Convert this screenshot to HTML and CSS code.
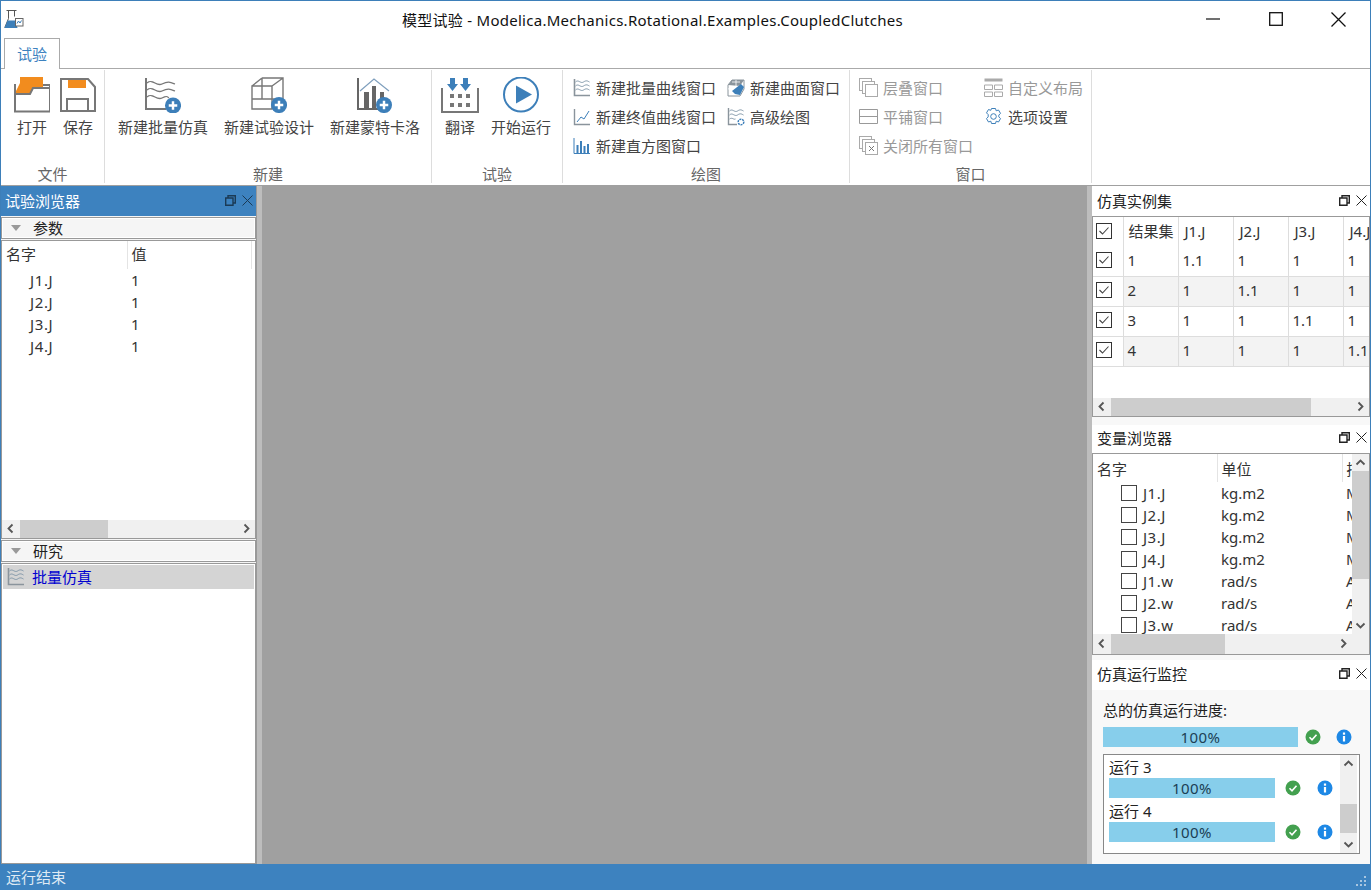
FILE: index.html
```html
<!DOCTYPE html>
<html lang="zh-CN">
<head>
<meta charset="UTF-8" />
<title>模型试验 - Modelica.Mechanics.Rotational.Examples.CoupledClutches</title>
<link rel="stylesheet" href="styles.css">
</head>
<body>
<svg class="defs" aria-hidden="true">
  <symbol id="plus" viewBox="0 0 18 18"><circle cx="9" cy="9" r="8.500" fill="#3d7fb9"/><path d="M9 4.500v9M4.500 9h9" stroke="#fff" stroke-width="2.600"/></symbol>
  <symbol id="waves" viewBox="0 0 18 18"><path d="M1.500 0v16.500H17" fill="none" stroke="#8a949c" stroke-width="1.600"/><g fill="none" stroke="#7f96a8" stroke-width="1"><path d="M2.500 3c3-3 5 2 8 0s4-1 6 0"/><path d="M2.500 7c3-3 5 2 8 0s4-1 6 0"/><path d="M2.500 11c3-3 5 2 8 0s4-1 6 0"/></g></symbol>
  <symbol id="restore" viewBox="0 0 11 11"><path d="M.7 3h7.300v7.300H.700zM3 3V.7h7.300V8H8" fill="none" stroke="currentColor" stroke-width="1.400"/></symbol>
  <symbol id="cross" viewBox="0 0 11 11"><path d="M.5.5l10 10M10.500.5l-10 10" fill="none" stroke="currentColor" stroke-width="1"/></symbol>
  <symbol id="ok" viewBox="0 0 16 16"><circle cx="8" cy="8" r="7.500" fill="#43a04f"/><path d="M4.500 8.300l2.500 2.500 4.500-5" fill="none" stroke="#fff" stroke-width="1.600"/></symbol>
  <symbol id="info" viewBox="0 0 16 16"><circle cx="8" cy="8" r="7.500" fill="#1e88e5"/><rect x="6.900" y="7" width="2.200" height="5.500" fill="#fff"/><rect x="6.900" y="3.500" width="2.200" height="2.200" fill="#fff"/></symbol>
  <symbol id="left" viewBox="0 0 17 17"><path d="M10.500 4.500l-4 4 4 4" fill="none" stroke="#555" stroke-width="1.800"/></symbol>
  <symbol id="right" viewBox="0 0 17 17"><path d="M6.500 4.500l4 4-4 4" fill="none" stroke="#555" stroke-width="1.800"/></symbol>
  <symbol id="up" viewBox="0 0 17 17"><path d="M4.500 10.500l4-4 4 4" fill="none" stroke="#555" stroke-width="1.800"/></symbol>
  <symbol id="down" viewBox="0 0 17 17"><path d="M4.500 6.500l4 4 4-4" fill="none" stroke="#555" stroke-width="1.800"/></symbol>
  <symbol id="tick" viewBox="0 0 16 16"><rect x=".5" y=".5" width="15" height="15" fill="#fff" stroke="#333"/><path d="M3.500 8l3 3 6-6.500" fill="none" stroke="#444" stroke-width="1.100"/></symbol>
</svg>

<div class="window">
  <div class="titlebar">
    <svg class="app-icon" viewBox="0 0 20 20">
      <path d="M2.500 1.500h10M4.500 1.500v8L.8 18.500h12M10.500 1.500v6" fill="none" stroke="#555" stroke-width="1"/>
      <path d="M3.500 11.500L.5 19h13l-2-7.500z" fill="#3d7fb9"/>
      <rect x="11.500" y="9.500" width="7.500" height="7.500" fill="#fff" stroke="#666"/>
      <path d="M13 14.500l1.500-2.500 1.500 2 1.500-2.500" fill="none" stroke="#3d7fb9"/>
    </svg>
    <div class="title">模型试验 - Modelica.Mechanics.Rotational.Examples.CoupledClutches</div>
    <div class="winbtn"><svg width="14" height="14" viewBox="0 0 14 14"><path d="M0 7h14" stroke="#111" stroke-width="1.200"/></svg></div>
    <div class="winbtn"><svg width="14" height="14" viewBox="0 0 14 14"><rect x=".7" y=".7" width="12.600" height="12.600" fill="none" stroke="#111" stroke-width="1.300"/></svg></div>
    <div class="winbtn"><svg width="15" height="15" viewBox="0 0 15 15"><path d="M.5.5l14 14M14.500.5l-14 14" stroke="#111" stroke-width="1.300"/></svg></div>
  </div>

  <div class="tabs"><div class="tab">试验</div></div>

  <div class="ribbon">
    <div class="group g-file">
      <div class="group-body large-row">
        <div class="big big-open">
          <svg class="big-icon" viewBox="0 0 36 36">
            <path d="M1 16l5-10V0h23v11H19l-3 6H1z" fill="#f28c1e"/>
            <path d="M1 7v27.500h35V8H29M1 17h15l3-6h17" fill="none" stroke="#777" stroke-width="2"/>
          </svg>
          <span>打开</span>
        </div>
        <div class="big big-save">
          <svg class="big-icon" viewBox="0 0 36 36">
            <rect x="8" y="1" width="18" height="10" fill="#f28c1e"/>
            <path d="M1 2h27l7 8v24H1zM7 34V22h21v12" fill="none" stroke="#777" stroke-width="2"/>
          </svg>
          <span>保存</span>
        </div>
      </div>
      <div class="group-name">文件</div>
    </div>

    <div class="group g-new">
      <div class="group-body large-row">
        <div class="big big-wide">
          <svg class="big-icon" viewBox="0 0 36 36">
            <g fill="none" stroke="#777" stroke-width="1.300">
              <path d="M1 1v31h20" stroke-width="2"/>
              <path d="M2 6c6-5 9 4 15 1s8-2 13 0"/>
              <path d="M2 13c6-5 9 4 15 1s8-2 13 0"/>
              <path d="M2 20c6-5 9 4 15 1s5-1 7 0"/>
            </g>
            <use href="#plus" x="19.500" y="20" width="17" height="17"/>
          </svg>
          <span>新建批量仿真</span>
        </div>
        <div class="big big-wide">
          <svg class="big-icon" viewBox="0 0 36 36">
            <path d="M1 9h20v23H1zM11 1h21v21H1M11 1v21M1 9l10-8M21 9L32 1M21 32l11-10" fill="none" stroke="#777" stroke-width="1.400"/>
            <use href="#plus" x="19.500" y="19.500" width="17" height="17"/>
          </svg>
          <span>新建试验设计</span>
        </div>
        <div class="big big-wide">
          <svg class="big-icon" viewBox="0 0 36 36">
            <path d="M1 1v31h24" fill="none" stroke="#666" stroke-width="2"/>
            <rect x="7" y="15" width="5" height="17" fill="#666"/>
            <rect x="15" y="9" width="4" height="23" fill="#666"/>
            <rect x="23" y="15" width="4" height="10" fill="#666"/>
            <path d="M3 14L17 2l15 12" fill="none" stroke="#7f9fbd" stroke-width="1.200"/>
            <use href="#plus" x="18.500" y="19.500" width="17" height="17"/>
          </svg>
          <span>新建蒙特卡洛</span>
        </div>
      </div>
      <div class="group-name">新建</div>
    </div>

    <div class="group g-run">
      <div class="group-body large-row">
        <div class="big big-trans">
          <svg class="big-icon icon-trans" viewBox="0 0 38 36">
            <path d="M1 11v24h36V11" fill="none" stroke="#777" stroke-width="2"/>
            <path d="M9 1h5v6h3l-5.500 7L6 7h3zM22 1h5v6h3l-5.500 7L19 7h3z" fill="#3d7fb9"/>
            <g fill="#777">
              <rect x="9" y="17" width="4" height="4"/><rect x="17" y="17" width="4" height="4"/><rect x="25" y="17" width="4" height="4"/>
              <rect x="9" y="26" width="4" height="4"/><rect x="17" y="26" width="4" height="4"/><rect x="25" y="26" width="4" height="4"/>
            </g>
          </svg>
          <span>翻译</span>
        </div>
        <div class="big big-play">
          <svg class="big-icon" viewBox="0 0 36 36">
            <circle cx="18" cy="17.500" r="17" fill="none" stroke="#3d7fb9" stroke-width="2"/>
            <path d="M13 8.500l16 9-16 9z" fill="#3d7fb9"/>
          </svg>
          <span>开始运行</span>
        </div>
      </div>
      <div class="group-name">试验</div>
    </div>

    <div class="group g-plot">
      <div class="group-body small-grid plot-grid">
        <div class="small"><svg class="small-icon"><use href="#waves"/></svg>新建批量曲线窗口</div>
        <div class="small"><svg class="small-icon" viewBox="0 0 18 18"><path d="M5 1h12v9l-4 7H1V6z" fill="#fff" stroke="#8a949c"/><path d="M1 6l4-5h12l-4 6z" fill="#8a949c"/><path d="M5 3h8M9 1v8M1 10l12-3" stroke="#fff" stroke-width=".8"/><path d="M5 12l9-7 3 3-4 8-5-1z" fill="#3d7fb9"/></svg>新建曲面窗口</div>
        <div class="small"><svg class="small-icon" viewBox="0 0 18 18"><path d="M1.500 1v15.500H17" fill="none" stroke="#8a949c" stroke-width="1.400"/><path d="M4 14l4-5 3 2 5-8" fill="none" stroke="#3d7fb9"/></svg>新建终值曲线窗口</div>
        <div class="small"><svg class="small-icon" viewBox="0 0 18 18"><path d="M1.500 0v16.500H10" fill="none" stroke="#8a949c" stroke-width="1.400"/><g fill="none" stroke="#7f96a8"><path d="M2.500 3c3-3 5 2 8 0s4-1 6 0"/><path d="M2.500 7c3-3 5 2 8 0s4-1 6 0"/><path d="M2.500 11c3-2 4 1 6 0"/></g><circle cx="14" cy="14" r="2.800" fill="none" stroke="#3d7fb9" stroke-width="1.500" stroke-dasharray="2 .8"/></svg>高级绘图</div>
        <div class="small"><svg class="small-icon" viewBox="0 0 18 18"><path d="M1 1v15.500h16" fill="none" stroke="#3d7fb9"/><path d="M4.500 8v8M8 4v12M11.500 9v7M15 7v9" stroke="#3d7fb9" stroke-width="2"/></svg>新建直方图窗口</div>
      </div>
      <div class="group-name">绘图</div>
    </div>

    <div class="group g-win">
      <div class="group-body small-grid win-grid">
        <div class="small off"><svg class="small-icon win-icon" viewBox="0 0 19 19"><g fill="#fff" stroke="#aaa"><rect x=".5" y=".5" width="12" height="12"/><rect x="3.500" y="3.500" width="12" height="12"/><rect x="6.500" y="6.500" width="12" height="12"/></g></svg>层叠窗口</div>
        <div class="small off"><svg class="small-icon win-icon" viewBox="0 0 19 19"><rect x=".5" y=".5" width="18" height="3" fill="#aaa"/><path d="M.5 7h8v4.500h-8zM10.500 7h8v4.500h-8zM.5 14h8v4.500h-8zM10.500 14h8v4.500h-8z" fill="none" stroke="#aaa"/></svg>自定义布局</div>
        <div class="small off"><svg class="small-icon win-icon" viewBox="0 0 19 19"><path d="M.5 2.500h18v14H.500zM.5 9.500h18" fill="none" stroke="#999"/></svg>平铺窗口</div>
        <div class="small"><svg class="small-icon win-icon" viewBox="0 0 19 19"><circle cx="9.500" cy="9.500" r="2.800" fill="none" stroke="#3d7fb9"/><path d="M7.500 1.500h4l.7 2.300 2.300-.8 2 3.400-1.700 1.700v1.800l1.700 1.700-2 3.400-2.300-.8-.7 2.300h-4l-.7-2.300-2.300.8-2-3.400 1.700-1.700V7.600L2.500 5.900l2-3.400 2.300.8z" fill="none" stroke="#3d7fb9"/></svg>选项设置</div>
        <div class="small off"><svg class="small-icon win-icon" viewBox="0 0 19 19"><g fill="#fff" stroke="#aaa"><rect x=".5" y=".5" width="12" height="12"/><rect x="3.500" y="3.500" width="12" height="12"/><rect x="6.500" y="6.500" width="12" height="12"/></g><path d="M10 10l5 5M15 10l-5 5" stroke="#777"/></svg>关闭所有窗口</div>
      </div>
      <div class="group-name">窗口</div>
    </div>
  </div>

  <div class="main">
    <div class="left-dock">
      <div class="dock-title active"><span>试验浏览器</span><svg class="dock-btn"><use href="#restore"/></svg><svg class="dock-btn"><use href="#cross"/></svg></div>
      <div class="sec-head"><i class="caret"></i>参数</div>
      <div class="box param-box">
        <div class="view">
          <table class="tbl params">
            <tr class="head"><th>名字</th><th>值</th></tr>
            <tr><td class="ind">J1.J</td><td>1</td></tr>
            <tr><td class="ind">J2.J</td><td>1</td></tr>
            <tr><td class="ind">J3.J</td><td>1</td></tr>
            <tr><td class="ind">J4.J</td><td>1</td></tr>
          </table>
        </div>
        <div class="hbar"><svg class="arrow"><use href="#left"/></svg><div class="track"><div class="thumb thumb-param"></div></div><svg class="arrow"><use href="#right"/></svg></div>
      </div>
      <div class="sec-head"><i class="caret"></i>研究</div>
      <div class="box study-box">
        <div class="study-row"><svg class="small-icon"><use href="#waves"/></svg>批量仿真</div>
      </div>
    </div>

    <div class="splitter"></div>
    <div class="center"></div>
    <div class="splitter"></div>

    <div class="right-dock">
      <div class="dock dock-sims">
        <div class="dock-title"><span>仿真实例集</span><svg class="dock-btn"><use href="#restore"/></svg><svg class="dock-btn"><use href="#cross"/></svg></div>
        <div class="box sims-box">
          <div class="view">
            <table class="tbl sims">
              <tr class="head"><th class="ck"><svg class="check"><use href="#tick"/></svg></th><th>结果集</th><th>J1.J</th><th>J2.J</th><th>J3.J</th><th>J4.J</th></tr>
              <tr><td class="ck"><svg class="check"><use href="#tick"/></svg></td><td>1</td><td>1.1</td><td>1</td><td>1</td><td>1</td></tr>
              <tr class="alt"><td class="ck"><svg class="check"><use href="#tick"/></svg></td><td>2</td><td>1</td><td>1.1</td><td>1</td><td>1</td></tr>
              <tr><td class="ck"><svg class="check"><use href="#tick"/></svg></td><td>3</td><td>1</td><td>1</td><td>1.1</td><td>1</td></tr>
              <tr class="alt"><td class="ck"><svg class="check"><use href="#tick"/></svg></td><td>4</td><td>1</td><td>1</td><td>1</td><td>1.1</td></tr>
            </table>
          </div>
          <div class="hbar"><svg class="arrow"><use href="#left"/></svg><div class="track"><div class="thumb thumb-sims"></div></div><svg class="arrow"><use href="#right"/></svg></div>
        </div>
      </div>

      <div class="dock dock-vars">
        <div class="dock-title"><span>变量浏览器</span><svg class="dock-btn"><use href="#restore"/></svg><svg class="dock-btn"><use href="#cross"/></svg></div>
        <div class="box vars-box">
          <div class="vars-top">
            <div class="view">
              <table class="tbl vars">
                <tr class="head"><th>名字</th><th>单位</th><th>描述</th></tr>
                <tr><td><span class="var"><i class="cb"></i>J1.J</span></td><td>kg.m2</td><td>Moment of inertia</td></tr>
                <tr><td><span class="var"><i class="cb"></i>J2.J</span></td><td>kg.m2</td><td>Moment of inertia</td></tr>
                <tr><td><span class="var"><i class="cb"></i>J3.J</span></td><td>kg.m2</td><td>Moment of inertia</td></tr>
                <tr><td><span class="var"><i class="cb"></i>J4.J</span></td><td>kg.m2</td><td>Moment of inertia</td></tr>
                <tr><td><span class="var"><i class="cb"></i>J1.w</span></td><td>rad/s</td><td>Absolute angular velocity</td></tr>
                <tr><td><span class="var"><i class="cb"></i>J2.w</span></td><td>rad/s</td><td>Absolute angular velocity</td></tr>
                <tr><td><span class="var"><i class="cb"></i>J3.w</span></td><td>rad/s</td><td>Absolute angular velocity</td></tr>
              </table>
            </div>
            <div class="vbar"><svg class="arrow"><use href="#up"/></svg><div class="vtrack"><div class="vthumb thumb-vars"></div></div><svg class="arrow"><use href="#down"/></svg></div>
          </div>
          <div class="hbar vars-hbar"><svg class="arrow"><use href="#left"/></svg><div class="track"><div class="thumb thumb-vars-h"></div></div><svg class="arrow"><use href="#right"/></svg></div>
        </div>
      </div>

      <div class="dock dock-mon">
        <div class="dock-title"><span>仿真运行监控</span><svg class="dock-btn"><use href="#restore"/></svg><svg class="dock-btn"><use href="#cross"/></svg></div>
        <div class="mon-body">
          <div class="mon-label">总的仿真运行进度:</div>
          <div class="prog-row total">
            <div class="prog">100%</div>
            <svg class="stat"><use href="#ok"/></svg>
            <svg class="stat"><use href="#info"/></svg>
          </div>
          <div class="runs">
            <div class="runs-list">
              <div class="run-name">运行 3</div>
              <div class="prog-row"><div class="prog">100%</div><svg class="stat"><use href="#ok"/></svg><svg class="stat"><use href="#info"/></svg></div>
              <div class="run-name">运行 4</div>
              <div class="prog-row"><div class="prog">100%</div><svg class="stat"><use href="#ok"/></svg><svg class="stat"><use href="#info"/></svg></div>
            </div>
            <div class="vbar"><svg class="arrow"><use href="#up"/></svg><div class="vtrack"><div class="vthumb thumb-runs"></div></div><svg class="arrow"><use href="#down"/></svg></div>
          </div>
        </div>
      </div>
    </div>
  </div>

  <div class="statusbar">
    <span>运行结束</span>
    <svg class="grip" viewBox="0 0 11 11"><g fill="#a9c6e0"><rect x="8" y="0" width="2" height="2"/><rect x="4" y="4" width="2" height="2"/><rect x="8" y="4" width="2" height="2"/><rect x="0" y="8" width="2" height="2"/><rect x="4" y="8" width="2" height="2"/><rect x="8" y="8" width="2" height="2"/></g></svg>
  </div>
</div>
</body>
</html>
```

FILE: styles.css
```css
/* Reset */
* {
  box-sizing: border-box;
}
html, body {
  margin: 0;
  height: 100%;
  overflow: hidden;
}
body {
  font-family: "Noto Sans", "Noto Sans CJK SC", sans-serif;
  font-size: 15px;
  color: #333;
  background: #fff;
}
svg {
  display: block;
  flex: none;
}
.defs {
  display: none;
}
.window {
  width: 1371px;
  height: 890px;
  display: flex;
  flex-direction: column;
  border: 1px solid #3d7fb9;
  border-bottom: none;
}

/* Title bar */
.titlebar {
  height: 37px;
  display: flex;
  align-items: center;
  padding-bottom: 1px;
  flex: none;
}
.app-icon {
  width: 20px;
  height: 20px;
  margin: 0 6px 1px 3px;
}
.title {
  flex: 1;
  text-align: center;
  padding-left: 94px;
  color: #111;
  white-space: nowrap;
  letter-spacing: .27px;
}
.winbtn {
  width: 63px;
  height: 36px;
  display: flex;
  align-items: center;
  justify-content: center;
}

/* Tabs */
.tabs {
  height: 31px;
  flex: none;
  padding-left: 3px;
  border-bottom: 1px solid #aaa;
}
.tab {
  width: 56px;
  height: 31px;
  border: 1px solid #aaa;
  border-bottom: none;
  background: #fff;
  color: #3d82bf;
  text-align: center;
  line-height: 31px;
}

/* Ribbon */
.ribbon {
  height: 117px;
  flex: none;
  display: flex;
  background: #fff;
  border-bottom: 1px solid #a0a0a0;
  padding-top: 1px;
}
.group {
  display: flex;
  flex-direction: column;
  border-right: 1px solid #ddd;
  margin-bottom: 2px;
}
.g-file { width: 104px; }
.g-new { width: 327px; }
.g-run { width: 131px; }
.g-plot { width: 287px; }
.g-win { width: 242px; }
.group-body {
  flex: 1;
}
.group-name {
  text-align: center;
  color: #666;
  height: 22px;
  line-height: 26px;
}
.large-row {
  display: flex;
  padding-top: 7px;
}
.big {
  display: flex;
  flex-direction: column;
  align-items: center;
  color: #444;
  white-space: nowrap;
}
.big span {
  margin-top: 3px;
  line-height: 22px;
}
.big-icon {
  width: 36px;
  height: 36px;
}
.icon-trans {
  width: 38px;
}
.big-open {
  width: 36px;
  margin-left: 13px;
}
.big-save {
  width: 36px;
  margin-left: 10px;
}
.big-wide {
  width: 90px;
  margin-left: 16px;
}
.big-wide:first-child {
  margin-left: 13px;
}
.big-trans {
  width: 38px;
  margin-left: 9px;
}
.big-play {
  width: 60px;
  margin-left: 12px;
}
.small-grid {
  display: grid;
  grid-auto-rows: 29px;
  padding-top: 3px;
}
.plot-grid {
  grid-template-columns: 154px auto;
  padding-left: 10px;
}
.win-grid {
  grid-template-columns: 125px auto;
  padding-left: 9px;
}
.small {
  display: flex;
  align-items: center;
  gap: 5px;
  color: #444;
  white-space: nowrap;
}
.small.off {
  color: #999;
}
.small-icon {
  width: 18px;
  height: 18px;
}
.win-icon {
  width: 19px;
  height: 19px;
}

/* Dock area */
.main {
  flex: 1;
  min-height: 0;
  display: flex;
}
.left-dock {
  width: 256px;
  flex: none;
  display: flex;
  flex-direction: column;
  background: #f5f5f5;
  border-right: 1px solid #999;
}
.splitter {
  width: 5px;
  flex: none;
  background: #bdbdbd;
}
.center {
  flex: 1;
  background: #a0a0a0;
}
.right-dock {
  width: 278px;
  flex: none;
  display: flex;
  flex-direction: column;
  background: #f8f8f8;
}
.dock-title {
  height: 30px;
  flex: none;
  display: flex;
  align-items: center;
  padding: 0 3px 2px 5px;
  gap: 6px;
  color: #222;
  background: #fff;
}
.dock-title span {
  flex: 1;
}
.dock-title.active {
  background: #3d82bf;
  color: #fff;
  padding-left: 4px;
}
.dock-btn {
  width: 11px;
  height: 11px;
  color: #222;
}
.active .dock-btn {
  color: #1b3a55;
}
.sec-head {
  height: 22px;
  flex: none;
  margin-top: 1px;
  display: flex;
  align-items: center;
  background: #f5f5f5;
  border: 1px solid #999;
  box-shadow: inset 0 0 0 1px #fff;
  padding: 0 0 1px 9px;
  color: #222;
}
.caret {
  width: 0;
  height: 0;
  border-left: 5px solid transparent;
  border-right: 5px solid transparent;
  border-top: 6px solid #999;
  margin-right: 12px;
}
.box {
  background: #fff;
  border: 1px solid #999;
  display: flex;
  flex-direction: column;
  min-height: 0;
}
.param-box {
  height: 299px;
  margin-top: 1px;
}
.study-box {
  flex: 1;
  margin-top: 1px;
  padding: 1px;
}
.study-row {
  height: 24px;
  display: flex;
  align-items: center;
  gap: 7px;
  padding: 0 0 1px 4px;
  background: #d4d4d4;
  color: #0000d0;
}
.view {
  flex: 1;
  min-width: 0;
  overflow: hidden;
}

/* Tables */
.tbl {
  border-collapse: collapse;
  table-layout: fixed;
}
.tbl th, .tbl td {
  font-weight: normal;
  text-align: left;
  padding: 0;
  white-space: nowrap;
  overflow: hidden;
}
.params {
  width: 250px;
}
.params th:nth-child(1) { width: 125px; }
.params th, .params td {
  padding-left: 4px;
  height: 22px;
}
.params .head th {
  height: 28px;
  padding-bottom: 3px;
  border-right: 1px solid #e4e4e4;
}
.params .ind {
  padding-left: 28px;
  letter-spacing: .6px;
}
.sims {
  width: 305px;
}
.sims th, .sims td {
  width: 55px;
  height: 30px;
  padding: 0 0 2px 4px;
  border-right: 1px solid #ddd;
  border-bottom: 1px solid #ddd;
}
.sims .head th {
  height: 29px;
  padding-left: 6px;
  border-bottom: none;
}
.sims .head th:nth-child(2) {
  padding-left: 5px;
}
.sims .ck,
.sims .head .ck {
  width: 30px;
  padding-left: 3px;
}
.sims .alt td {
  background: #f3f3f3;
}
.sims .alt .ck {
  background: #fff;
}
.check {
  width: 16px;
  height: 16px;
}
.vars {
  width: 300px;
}
.vars th, .vars td {
  padding-left: 4px;
  height: 22px;
}
.vars th:nth-child(1) { width: 124px; }
.vars th:nth-child(2) { width: 125px; }
.vars .head th {
  height: 28px;
  border-right: 1px solid #e4e4e4;
}
.var {
  display: flex;
  align-items: center;
  gap: 6px;
  padding-left: 24px;
  letter-spacing: .5px;
}
.cb {
  width: 16px;
  height: 16px;
  border: 1px solid #444;
  background: #fff;
}

/* Scroll bars */
.hbar {
  height: 18px;
  flex: none;
  display: flex;
  background: #f0f0f0;
}
.arrow {
  width: 17px;
  height: 17px;
}
.track {
  flex: 1;
  min-width: 0;
}
.thumb {
  height: 100%;
  background: #cdcdcd;
}
.thumb-param { width: 88px; margin-left: 1px; }
.thumb-sims { width: 200px; margin-left: 1px; }
.thumb-vars-h { width: 114px; margin-left: 1px; }
.vbar {
  width: 17px;
  flex: none;
  display: flex;
  flex-direction: column;
  background: #f0f0f0;
}
.vtrack {
  flex: 1;
  min-height: 0;
}
.vthumb {
  width: 100%;
  background: #cdcdcd;
}
.thumb-vars { height: 108px; }
.thumb-runs { height: 29px; margin-top: 32px; }

/* Right dock sizes */
.dock {
  display: flex;
  flex-direction: column;
}
.dock-sims { height: 239px; }
.dock-vars { height: 235px; }
.dock-mon { flex: 1; min-height: 0; }
.sims-box {
  height: 201px;
}
.dock-vars .dock-title {
  height: 28px;
  padding-bottom: 3px;
}
.dock-mon .dock-title {
  padding-bottom: 3px;
}
.vars-box {
  height: 202px;
}
.vars-top {
  flex: 1;
  min-height: 0;
  display: flex;
}
.vars-hbar {
  height: 20px;
  padding-right: 17px;
}
.vars-hbar .arrow {
  margin-top: 1px;
}

/* Run monitor */
.mon-body {
  flex: 1;
  padding: 10px 10px 11px 11px;
  background: #f8f8f8;
  color: #222;
}
.mon-label {
  line-height: 21px;
  margin-bottom: 6px;
}
.prog-row {
  display: flex;
  align-items: center;
}
.prog {
  width: 166px;
  height: 20px;
  background: #87ceeb;
  text-align: center;
  line-height: 20px;
  color: #1c3f55;
  letter-spacing: .4px;
}
.stat {
  width: 16px;
  height: 16px;
  margin-left: 10px;
}
.stat + .stat {
  margin-left: 16px;
}
.total .prog {
  width: 195px;
}
.total .stat {
  margin-left: 7px;
}
.total .stat + .stat {
  margin-left: 15px;
}
.runs {
  height: 100px;
  margin-top: 7px;
  width: 257px;
  display: flex;
  background: #fff;
  border: 1px solid #888;
}
.runs-list {
  flex: 1;
  padding: 2px 5px 0;
}
.run-name {
  height: 21px;
  line-height: 21px;
}
.prog-row + .run-name {
  margin-top: 3px;
}
.runs .vbar {
  margin-right: 2px;
}

/* Status bar */
.statusbar {
  height: 26px;
  flex: none;
  margin: 0 -1px;
  background: #3d82bf;
  color: #dfeaf4;
  display: flex;
  align-items: center;
  justify-content: space-between;
  padding: 0 4px 2px 6px;
}
.grip {
  width: 11px;
  height: 11px;
  align-self: flex-end;
  margin-bottom: 1px;
}
```
